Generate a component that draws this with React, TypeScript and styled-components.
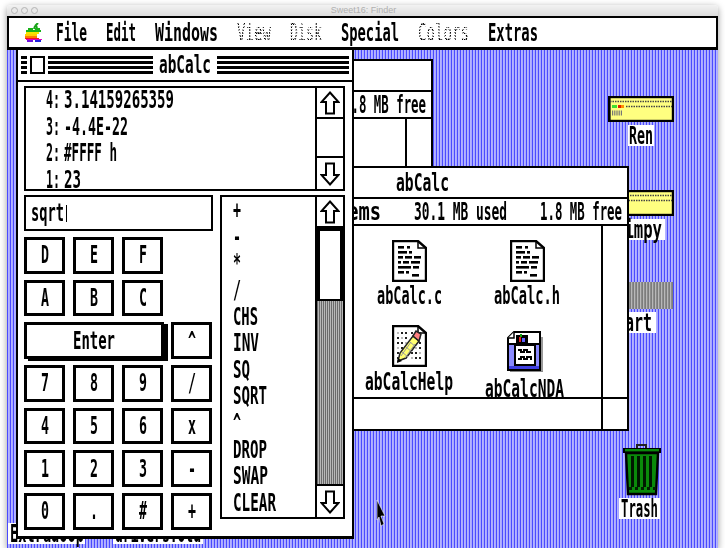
import React from "react";
import styled, { createGlobalStyle } from "styled-components";

const ADVANCE = 15.05;

const Global = createGlobalStyle`
  html, body { margin: 0; padding: 0; background: #fff; overflow: hidden; }
  * { box-sizing: border-box; }
`;

const Frame = styled.div`
  margin: 5px 0 0 7px;
  width: 711px;
  height: 543px;
  display: flex;
  flex-direction: column;
  border-radius: 4px 4px 0 0;
  box-shadow: 0 2px 7px rgba(0, 0, 0, 0.4);
`;
const HostBar = styled.div`
  height: 11px;
  position: relative;
  display: flex;
  align-items: center;
  gap: 3px;
  padding-left: 4px;
  background: linear-gradient(#f2f2f2, #dcdcdc);
  border-radius: 4px 4px 0 0;
`;
const HostLight = styled.span`
  width: 7px;
  height: 7px;
  border-radius: 50%;
  border: 1px solid #b4b4b4;
  background: #e8e8e8;
`;
const HostTitle = styled.span`
  flex: 1;
  text-align: center;
  font: 9px/11px "Liberation Sans", sans-serif;
  color: #b0b0b0;
  margin-left: -32px;
`;
const Screen = styled.div`
  flex: 1;
  display: flex;
  flex-direction: column;
  overflow: hidden;
`;
const MenuBar = styled.div`
  height: 34px;
  background: #fff;
  border: 2px solid #000;
  border-width: 2px 2px 3px 2px;
  display: flex;
  align-items: center;
  gap: 19px;
  padding-left: 16px;
  position: relative;
  z-index: 5;
`;
const AppleMark = styled.svg`
  width: 18px;
  height: 19px;
  margin-right: -6px;
  margin-top: -1px;
`;
const Canvas = styled.div`
  flex: 1;
  position: relative;
  background: repeating-linear-gradient(90deg, #4a4aff 0 1px, #b4b4ff 1px 2px, #a8a8ff 2px 3px);
`;
const Glyphs = styled.span<{ $w: number; $sx: number; $gray?: boolean }>`
  display: inline-block;
  flex: none;
  width: ${(p) => p.$w}px;
  height: 24px;
  white-space: pre;
  font: bold 25px/24px "DejaVu Sans Mono", monospace;
  color: #000;
  transform-origin: 0 50%;
  transform: scaleX(${(p) => p.$sx});
  ${(p) =>
    p.$gray
      ? `font-weight: normal;
         color: transparent;
         background: repeating-conic-gradient(#000 0 25%, #fff 0 50%) 0 0 / 4px 3px;
         -webkit-background-clip: text;
         background-clip: text;
         width: ${p.$w / p.$sx}px;
         margin-right: ${p.$w - p.$w / p.$sx}px;`
      : ""}
`;
function T({ children, w, gray }: { children: string; w?: number; gray?: boolean }) {
  const width = w ?? children.length * 8;
  return (
    <Glyphs $w={width} $sx={width / (children.length * ADVANCE)} $gray={gray}>
      {children}
    </Glyphs>
  );
}

/* Finder windows behind the calculator */
const FinderWin = styled.div<{ $x: number; $y: number; $w: number; $h: number }>`
  position: absolute;
  left: ${(p) => p.$x}px;
  top: ${(p) => p.$y}px;
  width: ${(p) => p.$w}px;
  height: ${(p) => p.$h}px;
  background: #fff;
  border: 2px solid #000;
  display: flex;
  flex-direction: column;
`;
const FinderTitle = styled.div`
  height: 31px;
  flex: none;
  border-bottom: 2px solid #000;
  display: flex;
  align-items: center;
  justify-content: center;
`;
const FinderInfo = styled.div<{ $left: number }>`
  height: 27px;
  flex: none;
  border-bottom: 2px solid #000;
  display: flex;
  align-items: center;
  justify-content: space-between;
  padding: 0 5px 0 ${(p) => p.$left}px;
`;
const FinderMain = styled.div`
  flex: 1;
  display: flex;
  min-height: 0;
`;
const FinderContent = styled.div`
  flex: 1;
  position: relative;
  overflow: hidden;
`;
const FinderScroll = styled.div`
  width: 26px;
  flex: none;
  border-left: 2px solid #000;
`;
const FinderBottom = styled.div`
  height: 32px;
  flex: none;
  border-top: 2px solid #000;
  display: flex;
  justify-content: flex-end;
`;
const FileItem = styled.div<{ $x: number; $y: number }>`
  position: absolute;
  left: ${(p) => p.$x}px;
  top: ${(p) => p.$y}px;
  display: flex;
  flex-direction: column;
  align-items: center;
`;
const FileArt = styled.svg<{ $w: number; $h: number }>`
  width: ${(p) => p.$w}px;
  height: ${(p) => p.$h}px;
  flex: none;
  display: block;
`;
const FileName = styled.div<{ $top: number }>`
  height: 24px;
  margin-top: ${(p) => p.$top}px;
  display: flex;
`;

/* Desktop items */
const DeskArt = styled.svg<{ $x: number; $y: number; $w: number; $h: number }>`
  position: absolute;
  left: ${(p) => p.$x}px;
  top: ${(p) => p.$y}px;
  width: ${(p) => p.$w}px;
  height: ${(p) => p.$h}px;
  display: block;
`;
const CartBlock = styled.div`
  position: absolute;
  left: 590px;
  top: 232px;
  width: 76px;
  height: 27px;
  background: repeating-linear-gradient(90deg, #7c7c7c 0 1px, #b8b8b8 1px 2px, #8c8c8c 2px 3px);
`;
const DeskLabel = styled.div<{ $x: number; $y: number; $w: number }>`
  position: absolute;
  left: ${(p) => p.$x}px;
  top: ${(p) => p.$y}px;
  width: ${(p) => p.$w}px;
  height: 21px;
  background: #fff;
  display: flex;
  align-items: center;
  justify-content: center;
`;
const CursorArt = styled.svg`
  position: absolute;
  left: 369px;
  top: 449px;
  width: 10px;
  height: 29px;
  z-index: 6;
`;

/* The calculator */
const CalcWin = styled.div`
  position: absolute;
  left: 9px;
  top: 0;
  width: 338px;
  height: 488px;
  background: #fff;
  border: 2px solid #000;
  border-width: 0 2px 2px 2px;
  box-shadow: 0 1px 0 #000;
  display: flex;
  flex-direction: column;
  z-index: 3;
`;
const CalcTitle = styled.div`
  height: 32px;
  flex: none;
  border-bottom: 2px solid #000;
  display: flex;
  align-items: center;
  gap: 3px;
  padding: 0 3px;
`;
const TitleStripes = styled.span<{ $w?: number }>`
  display: block;
  height: 18px;
  ${(p) => (p.$w ? `width: ${p.$w}px; flex: none;` : "flex: 1;")}
  background: repeating-linear-gradient(180deg, #000 0 3px, #fff 3px 5px);
`;
const CloseBox = styled.span`
  width: 15px;
  height: 18px;
  flex: none;
  border: 2px solid #000;
`;
const TitleName = styled.span`
  padding: 0 3px 0 3px;
  flex: none;
  display: flex;
`;
const CalcBody = styled.div`
  flex: 1;
  display: flex;
  flex-direction: column;
  gap: 4px;
  padding: 4px 7px 0 6px;
`;
const Pane = styled.div<{ $h: number; $grow?: boolean }>`
  height: ${(p) => p.$h}px;
  flex: ${(p) => (p.$grow ? "1" : "none")};
  border: 2px solid #000;
  display: flex;
  overflow: hidden;
`;
const StackList = styled.div`
  flex: 1;
  margin-top: -1px;
  padding: 0 0 0 20px;
`;
const StackRow = styled.div`
  height: 26.5px;
  display: flex;
  align-items: center;
  gap: 4px;
`;
const ScrollCol = styled.div`
  width: 28px;
  flex: none;
  border-left: 2px solid #000;
  display: flex;
  flex-direction: column;
`;
const ArrowCell = styled.div<{ $pos: "top" | "bottom"; $h: number }>`
  height: ${(p) => p.$h}px;
  flex: none;
  display: flex;
  align-items: center;
  justify-content: center;
  ${(p) => (p.$pos === "top" ? "border-bottom: 2px solid #000;" : "border-top: 2px solid #000;")}
`;
const ArrowArt = styled.svg<{ $down?: boolean }>`
  width: 20px;
  height: 24px;
  display: block;
  ${(p) => (p.$down ? "transform: scaleY(-1);" : "")}
`;
const ScrollGap = styled.div`
  flex: 1;
`;
const Thumb = styled.div`
  height: 73px;
  flex: none;
  background: #fff;
  border: 3px solid #000;
  border-width: 3px 3px 2px 3px;
`;
const Track = styled.div`
  flex: 1;
  background: repeating-linear-gradient(90deg, #6a6a6a 0 1px, #b8b8b8 1px 2px);
`;
const LowerRow = styled.div`
  display: flex;
  gap: 7px;
  align-items: flex-start;
`;
const KeysColumn = styled.div`
  width: 189px;
  flex: none;
  display: flex;
  flex-direction: column;
  gap: 6px;
`;
const EntryField = styled.div`
  height: 36px;
  border: 2px solid #000;
  display: flex;
  align-items: center;
  padding-left: 5px;
`;
const Caret = styled.span`
  width: 1px;
  height: 17px;
  background: #000;
  margin-left: 2px;
`;
const KeyGrid = styled.div`
  display: grid;
  grid-template-columns: repeat(4, 41px);
  grid-auto-rows: 36.7px;
  column-gap: 8px;
  row-gap: 6px;
`;
const Key = styled.div<{ $wide?: boolean }>`
  border: 3px solid #000;
  display: flex;
  align-items: center;
  justify-content: center;
  background: #fff;
  ${(p) => (p.$wide ? "grid-column: span 3; box-shadow: 4px 2px 0 #000; margin-right: -1px;" : "")}
`;
const OpList = styled.div`
  flex: 1;
  padding-left: 11px;
`;
const OpRow = styled.div`
  height: 26.6px;
  display: flex;
  align-items: center;
`;

const AppleLogo = () => (
  <AppleMark viewBox="0 0 18 19">
    <path d="M9 6 L10 3 M10 3 L13 0 M11 2 L12 5" stroke="#19a319" strokeWidth="2" fill="none" />
    <rect x="3" y="5" width="5" height="2" fill="#19b319" />
    <rect x="10" y="5" width="5" height="2" fill="#19b319" />
    <rect x="1" y="7" width="15" height="2" fill="#19b319" />
    <rect x="1" y="9" width="13" height="2" fill="#f4e400" />
    <rect x="0" y="11" width="12" height="2" fill="#ffd000" />
    <rect x="0" y="13" width="12" height="2" fill="#ff7a00" />
    <rect x="0" y="15" width="14" height="1" fill="#f01818" />
    <rect x="1" y="16" width="16" height="1" fill="#e000c0" />
    <rect x="2" y="17" width="6" height="2" fill="#7010e0" />
    <rect x="10" y="17" width="6" height="2" fill="#2020e0" />
  </AppleMark>
);

const Arrow = ({ down }: { down?: boolean }) => (
  <ArrowArt viewBox="0 0 20 24" $down={down}>
    <path d="M10 1.5 L18.5 11 H14 V22.5 H6 V11 H1.5 Z" fill="#fff" stroke="#000" strokeWidth="2" />
  </ArrowArt>
);

const docLines: [number, number, number][] = [
  [6, 6, 6], [15, 6, 3],
  [6, 11, 9], [17, 11, 3],
  [6, 16, 5], [13, 16, 7], [22, 16, 7],
  [6, 21, 3], [11, 21, 6], [19, 21, 9],
  [6, 26, 13], [21, 26, 6],
  [6, 31, 6], [14, 31, 3], [20, 34, 7],
];

const DocFrame = () => (
  <>
    <path d="M1 1 H26 L34 8 V41 H1 Z" fill="#fff" stroke="#000" strokeWidth="2.4" />
    <path d="M26 1 V8 H34" fill="none" stroke="#000" strokeWidth="1.5" />
  </>
);

const DocIcon = () => (
  <FileArt viewBox="0 0 35 42" $w={35} $h={42}>
    <DocFrame />
    {docLines.map(([x, y, w]) => (
      <rect key={`${x}-${y}`} x={x} y={y} width={w} height={2.6} fill="#000" />
    ))}
  </FileArt>
);

const HelpIcon = () => (
  <FileArt viewBox="0 0 35 42" $w={35} $h={42}>
    <DocFrame />
    {[7, 12, 17, 22, 27, 32].map((y) =>
      [5, 9, 13, 19, 23, 27].map((x) => (
        <rect key={`${x}-${y}`} x={x} y={y} width={2} height={2} fill={(x + y) % 3 === 0 ? "#bbb" : "#222"} />
      ))
    )}
    <path d="M6 36 L8 28 L21 11 L27 16 L14 33 Z" fill="#ffff70" stroke="#222" strokeWidth="1.5" />
    <path d="M10 27 L16 32 M14 22 L20 27 M18 17 L24 22 M9 31 L19 17 M13 33 L23 19" stroke="#999" strokeWidth="1" />
    <path d="M21 11 L24 6 L29 9 L27 16 Z" fill="#ff8080" stroke="#222" strokeWidth="1.5" />
    <path d="M5 38 L6 33 L10 36 Z" fill="#000" />
  </FileArt>
);

const NdaIcon = () => (
  <FileArt viewBox="0 0 36 43" $w={36} $h={43}>
    <rect x="3" y="38" width="33" height="3" fill="#888" />
    <rect x="34" y="6" width="2" height="34" fill="#999" />
    <path d="M7 1 H33 V39 H1 V7 Z" fill="#fff" stroke="#000" strokeWidth="2" />
    <path d="M1 7 H7 V1" fill="#fff" stroke="#000" strokeWidth="1.5" />
    <rect x="2" y="13" width="30" height="25" fill="#8a8aff" />
    <rect x="2" y="35" width="30" height="3" fill="#4040e0" />
    <rect x="2" y="12" width="30" height="2" fill="#000" />
    <rect x="9" y="4" width="12" height="9" fill="#000" />
    <rect x="13" y="3" width="2" height="3" fill="#10a010" />
    <rect x="12" y="6" width="2" height="5" fill="#e02020" />
    <rect x="15" y="7" width="3" height="4" fill="#6060ff" />
    <rect x="8" y="14" width="20" height="20" fill="#fff" stroke="#000" strokeWidth="2" />
    <path d="M11 19 H14 V21 H17 V19 H20 V21 H24" stroke="#000" strokeWidth="2" fill="none" />
    <path d="M11 28 H14 V26 H17 V28 H20 V26 H24 V29" stroke="#000" strokeWidth="2" fill="none" />
  </FileArt>
);

const Drive = ({ x, y }: { x: number; y: number }) => (
  <DeskArt viewBox="0 0 66 26" $x={x} $y={y} $w={66} $h={26}>
    <rect x="1" y="1" width="64" height="24" fill="#ffff80" stroke="#000" strokeWidth="2.4" />
    <rect x="0" y="2" width="2.5" height="22" fill="#000" />
    <path d="M2 5.5 H64" stroke="#444" strokeWidth="1.5" strokeDasharray="1.5 1" />
    <path d="M18 10.5 H64" stroke="#444" strokeWidth="1.5" strokeDasharray="1.5 1" />
    <rect x="4" y="9" width="5" height="3" fill="#40e030" />
    <rect x="10" y="9" width="3" height="3" fill="#e02000" />
    <rect x="13" y="9" width="3" height="3" fill="#ff9000" />
    <path d="M4 17 H15" stroke="#777" strokeWidth="5" strokeDasharray="1.2 1" />
  </DeskArt>
);

const Trash = () => (
  <DeskArt viewBox="0 0 38 53" $x={616} $y={393} $w={38} $h={53}>
    <path d="M14 6 V2 H23 V6" fill="none" stroke="#222" strokeWidth="2" />
    <rect x="0" y="5" width="38" height="5" fill="#000" />
    <rect x="2" y="6" width="34" height="2.5" fill="#0a8a0a" />
    <path d="M3 10 H35 L33 51 H5 Z" fill="#0a8a0a" stroke="#000" strokeWidth="2.4" />
    {[8, 14, 20, 26].map((x) => (
      <rect key={x} x={x} y="13" width="3" height="31" fill="#001800" />
    ))}
    {[6, 12, 18, 24, 30].map((x) => (
      <rect key={x} x={x} y="44" width="3" height="3" fill="#002000" />
    ))}
  </DeskArt>
);

const Cursor = () => (
  <CursorArt viewBox="0 0 10 29">
    <path d="M1 1 L1 21 L3 18 L5 27 L8 25 L5 17 L9 17 Z" fill="#000" stroke="#fff" strokeWidth="0.6" />
  </CursorArt>
);

const keys: (string | null)[] = ["D", "E", "F", null, "A", "B", "C", null];
const lowerKeys = ["^", "7", "8", "9", "/", "4", "5", "6", "x", "1", "2", "3", "-", "0", ".", "#", "+"];
const ops: [string, number?][] = [
  ["+"], ["-"], ["*"], ["/"], ["CHS", 25], ["INV", 26], ["SQ", 17], ["SQRT", 34], ["^"], ["DROP", 34], ["SWAP", 35], ["CLEAR", 43],
];
const stack: [string, string, number][] = [
  ["4:", "3.14159265359", 110],
  ["3:", "-4.4E-22", 64],
  ["2:", "#FFFF h", 53],
  ["1:", "23", 17],
];

export default function App() {
  return (
    <>
      <Global />
      <Frame>
        <HostBar>
          <HostLight />
          <HostLight />
          <HostLight />
          <HostTitle>Sweet16: Finder</HostTitle>
        </HostBar>
        <Screen>
          <MenuBar>
            <AppleLogo />
            <T w={31}>File</T>
            <T w={30}>Edit</T>
            <T w={63}>Windows</T>
            <T w={34} gray>View</T>
            <T w={32} gray>Disk</T>
            <T w={58}>Special</T>
            <T w={51} gray>Colors</T>
            <T w={50}>Extras</T>
          </MenuBar>
          <Canvas>
            <FinderWin $x={193} $y={9} $w={233} $h={140}>
              <FinderTitle />
              <FinderInfo $left={0}>
                <span />
                <T w={82}>1.8 MB free</T>
              </FinderInfo>
              <FinderMain>
                <FinderContent />
                <FinderScroll />
              </FinderMain>
            </FinderWin>

            <Drive x={601} y={46} />
            <DeskLabel $x={621} $y={75} $w={26}><T w={24}>Ren</T></DeskLabel>
            <Drive x={601} y={140} />
            <DeskLabel $x={605} $y={169} $w={53}><T w={47}>Simpy</T></DeskLabel>
            <CartBlock />
            <DeskLabel $x={605} $y={262} $w={44}><T w={36}>Cart</T></DeskLabel>
            <Trash />
            <DeskLabel $x={612} $y={448} $w={41}><T w={37}>Trash</T></DeskLabel>
            <DeskLabel $x={1} $y={473} $w={77}><T w={74}>Extradoop</T></DeskLabel>
            <DeskLabel $x={106} $y={473} $w={90}><T w={86}>drivers.old</T></DeskLabel>

            <FinderWin $x={208} $y={116} $w={414} $h={265}>
              <FinderTitle>
                <T w={53}>abCalc</T>
              </FinderTitle>
              <FinderInfo $left={85}>
                <T w={79}>4 items</T>
                <T w={93}>30.1 MB used</T>
                <T w={82}>1.8 MB free</T>
              </FinderInfo>
              <FinderMain>
                <FinderContent>
                  <FileItem $x={160} $y={14}>
                    <DocIcon />
                    <FileName $top={2}><T w={65}>abCalc.c</T></FileName>
                  </FileItem>
                  <FileItem $x={277} $y={14}>
                    <DocIcon />
                    <FileName $top={2}><T w={66}>abCalc.h</T></FileName>
                  </FileItem>
                  <FileItem $x={148} $y={99}>
                    <HelpIcon />
                    <FileName $top={3}><T w={88}>abCalcHelp</T></FileName>
                  </FileItem>
                  <FileItem $x={268} $y={105}>
                    <NdaIcon />
                    <FileName $top={3}><T w={79}>abCalcNDA</T></FileName>
                  </FileItem>
                </FinderContent>
                <FinderScroll />
              </FinderMain>
              <FinderBottom>
                <FinderScroll />
              </FinderBottom>
            </FinderWin>

            <CalcWin>
              <CalcTitle>
                <TitleStripes $w={6} />
                <CloseBox />
                <TitleStripes $w={105} />
                <TitleName><T w={52}>abCalc</T></TitleName>
                <TitleStripes />
              </CalcTitle>
              <CalcBody>
                <Pane $h={105}>
                  <StackList>
                    {stack.map(([index, value, w]) => (
                      <StackRow key={index}>
                        <T w={14}>{index}</T>
                        <T w={w}>{value}</T>
                      </StackRow>
                    ))}
                  </StackList>
                  <ScrollCol>
                    <ArrowCell $pos="top" $h={31}><Arrow /></ArrowCell>
                    <ScrollGap />
                    <ArrowCell $pos="bottom" $h={33}><Arrow down /></ArrowCell>
                  </ScrollCol>
                </Pane>
                <LowerRow>
                  <KeysColumn>
                    <EntryField>
                      <T w={33}>sqrt</T>
                      <Caret />
                    </EntryField>
                    <KeyGrid>
                      {keys.map((k, i) =>
                        k ? <Key key={i}><T w={8}>{k}</T></Key> : <span key={i} />
                      )}
                      <Key $wide><T w={42}>Enter</T></Key>
                      {lowerKeys.map((k) => (
                        <Key key={k}><T w={8}>{k}</T></Key>
                      ))}
                    </KeyGrid>
                  </KeysColumn>
                  <Pane $h={324} $grow>
                    <OpList>
                      {ops.map(([label, w]) => (
                        <OpRow key={label}><T w={w}>{label}</T></OpRow>
                      ))}
                    </OpList>
                    <ScrollCol>
                      <ArrowCell $pos="top" $h={31}><Arrow /></ArrowCell>
                      <Thumb />
                      <Track />
                      <ArrowCell $pos="bottom" $h={33}><Arrow down /></ArrowCell>
                    </ScrollCol>
                  </Pane>
                </LowerRow>
              </CalcBody>
            </CalcWin>
            <Cursor />
          </Canvas>
        </Screen>
      </Frame>
    </>
  );
}
